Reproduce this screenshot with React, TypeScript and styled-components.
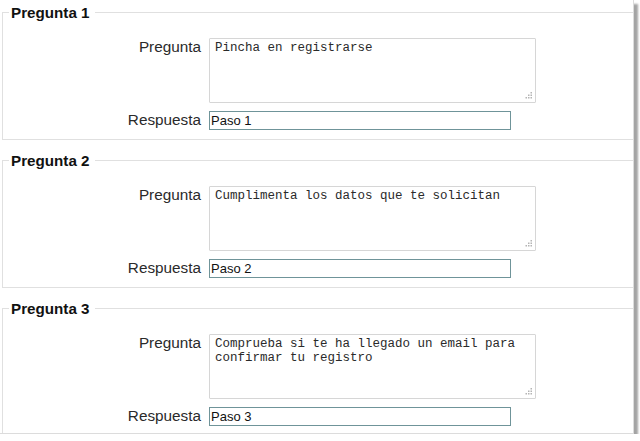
import React from "react";
import styled, { createGlobalStyle } from "styled-components";

const GlobalStyle = createGlobalStyle`
  html, body {
    margin: 0;
    padding: 0;
    background: #ffffff;
  }
  body {
    font-family: "Liberation Sans", Arial, sans-serif;
  }
`;

const Page = styled.div`
  width: 634px;
  height: 434px;
  box-sizing: border-box;
  border-right: 1px solid #dcdcdc;
  border-bottom: 1px solid #dcdcdc;
  background: #ffffff;
  overflow: hidden;
  box-shadow: 4px 4px 2px #a4a4a4;
`;

const Group = styled.fieldset`
  margin: 4px -10px 12px 2px;
  padding: 17px 0 9px 0;
  border: 1px solid #e0e0e0;
  min-width: 0;
`;

const Legend = styled.legend`
  margin-left: 6px;
  padding: 0 5px 0 2px;
  font-family: "Liberation Sans", Arial, sans-serif;
  font-weight: bold;
  font-size: 15.2px;
  line-height: 17px;
  color: #111111;
`;

const Row = styled.div<{ $gap?: number }>`
  display: flex;
  align-items: flex-start;
  margin-top: ${(p) => p.$gap ?? 0}px;
`;

const Label = styled.label`
  width: 198px;
  margin-right: 8px;
  flex: none;
  text-align: right;
  font-family: "Liberation Sans", Arial, sans-serif;
  font-size: 15.3px;
  line-height: 17px;
  color: #2a2a2a;
`;

const AreaWrap = styled.div`
  position: relative;
  width: 327px;
  height: 65px;
`;

const TextArea = styled.textarea`
  display: block;
  box-sizing: border-box;
  width: 100%;
  height: 100%;
  margin: 0;
  padding: 2px 5px;
  border: 1px solid #d6d6d6;
  border-radius: 1px;
  resize: none;
  outline: none;
  font-family: "Liberation Mono", "Courier New", monospace;
  font-size: 12.5px;
  color: #2a2a2a;
  background: #ffffff;
`;

const Grip = styled.svg`
  position: absolute;
  right: 4px;
  bottom: 4px;
  width: 7px;
  height: 7px;
  pointer-events: none;
`;

const TextInput = styled.input`
  box-sizing: border-box;
  width: 302px;
  height: 19px;
  margin: 0;
  padding: 1px 1px;
  border: 1px solid #6f9499;
  outline: none;
  font-family: "Liberation Sans", Arial, sans-serif;
  font-size: 13px;
  color: #111111;
  background: #ffffff;
`;

const items = [
  { n: 1, q: "Pincha en registrarse", a: "Paso 1" },
  { n: 2, q: "Cumplimenta los datos que te solicitan", a: "Paso 2" },
  {
    n: 3,
    q: "Comprueba si te ha llegado un email para confirmar tu registro",
    a: "Paso 3",
  },
];

function ResizeGrip() {
  const dots: [number, number][] = [
    [5.5, 0],
    [3, 2.5],
    [5.5, 2.5],
    [0.5, 5],
    [3, 5],
    [5.5, 5],
  ];
  return (
    <Grip viewBox="0 0 7 7">
      {dots.map(([x, y], i) => (
        <rect key={i} x={x} y={y} width="1.5" height="1.5" fill="#b4b4b4" />
      ))}
    </Grip>
  );
}

export default function App() {
  return (
    <>
      <GlobalStyle />
      <Page>
        {items.map((it) => (
          <Group key={it.n}>
            <Legend>Pregunta {it.n}</Legend>
            <Row>
              <Label>Pregunta</Label>
              <AreaWrap>
                <TextArea defaultValue={it.q} />
                <ResizeGrip />
              </AreaWrap>
            </Row>
            <Row $gap={8}>
              <Label>Respuesta</Label>
              <TextInput type="text" defaultValue={it.a} />
            </Row>
          </Group>
        ))}
      </Page>
    </>
  );
}
